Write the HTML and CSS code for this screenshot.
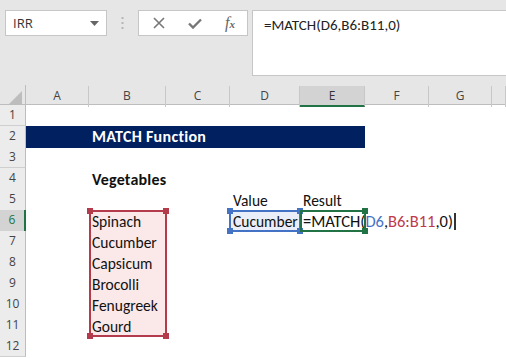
FILE: index.html
```html
<!DOCTYPE html>
<html lang="en">
  <head>
    <meta charset="UTF-8" />
    <title>MATCH Function</title>
    <link rel="stylesheet" href="styles.css">
  </head>
  <body>
    <div class="toolbar">
      <div class="namebox">
        <span>IRR</span>
        <svg width="9" height="5" viewBox="0 0 9 5"><path d="M0 0h9L4.5 5z" fill="#666"/></svg>
      </div>
      <div class="grip">
        <svg width="3" height="12" viewBox="0 0 3 12"><rect x="0.5" y="0" width="2" height="2" fill="#b5b5b5"/><rect x="0.5" y="5" width="2" height="2" fill="#b5b5b5"/><rect x="0.5" y="10" width="2" height="2" fill="#b5b5b5"/></svg>
      </div>
      <div class="fxbtns">
        <svg width="12" height="12" viewBox="0 0 12 12"><path d="M1 1l10 10M11 1L1 11" stroke="#777" stroke-width="1.6"/></svg>
        <svg width="14" height="11" viewBox="0 0 14 11"><path d="M1 5.5l4 4L13 1.5" stroke="#777" stroke-width="2.4" fill="none"/></svg>
        <span class="fx">f<small>x</small></span>
      </div>
      <div class="formula">=MATCH(D6,B6:B11,0)</div>
    </div>

    <div class="sheet">
      <div class="row heads">
        <div class="corner"><svg width="14" height="14" viewBox="0 0 14 14"><path d="M14 0v14H0z" fill="#bdbdbd"/></svg></div>
        <div class="ch">A</div>
        <div class="ch">B</div>
        <div class="ch">C</div>
        <div class="ch">D</div>
        <div class="ch active">E</div>
        <div class="ch">F</div>
        <div class="ch">G</div>
        <div class="ch"></div>
      </div>
      <div class="row"><div class="rh">1</div></div>
      <div class="row"><div class="rh">2</div><div class="title">MATCH Function</div></div>
      <div class="row"><div class="rh">3</div></div>
      <div class="row"><div class="rh">4</div><div class="cell colb bold">Vegetables</div></div>
      <div class="row"><div class="rh">5</div><div class="cell cold">Value</div><div class="cell cole">Result</div></div>
      <div class="row"><div class="rh active">6</div><div class="cell colb pink">Spinach</div><div class="cell cold blue">Cucumber</div><div class="cell cole wide">=MATCH(<span class="ref-d">D6</span>,<span class="ref-b">B6:B11</span>,0)<i class="caret"></i></div></div>
      <div class="row"><div class="rh">7</div><div class="cell colb pink">Cucumber</div></div>
      <div class="row"><div class="rh">8</div><div class="cell colb pink">Capsicum</div></div>
      <div class="row"><div class="rh">9</div><div class="cell colb pink">Brocolli</div></div>
      <div class="row"><div class="rh">10</div><div class="cell colb pink">Fenugreek</div></div>
      <div class="row"><div class="rh">11</div><div class="cell colb pink">Gourd</div></div>
      <div class="row"><div class="rh">12</div></div>

      <div class="range red"><span class="h tl"></span><span class="h tr"></span><span class="h bl"></span><span class="h br"></span></div>
      <div class="range bluebox"><span class="h tl"></span><span class="h tr"></span><span class="h bl"></span><span class="h br"></span></div>
      <div class="range greenbox"><span class="h tr"></span><span class="h br"></span></div>
    </div>
  </body>
</html>
```

FILE: styles.css
```css
* {
  margin: 0;
  box-sizing: border-box;
}

body {
  margin: 0;
  padding: 0;
  background: #fff;
  font-family: Carlito, Lato, "Liberation Sans", sans-serif;
  overflow: hidden;
}

/* formula bar */

.toolbar {
  height: 85px;
  background: #e6e6e6;
  display: flex;
  align-items: flex-start;
  padding-top: 10px;
  padding-left: 5px;
}

.namebox {
  width: 102px;
  height: 26px;
  background: #fff;
  border: 1px solid #c6c6c6;
  display: flex;
  align-items: center;
  justify-content: space-between;
  padding: 0 7px 0 7px;
  font-family: "Open Sans", sans-serif;
  font-size: 13px;
  color: #333;
}

.grip {
  width: 31px;
  height: 26px;
  display: flex;
  align-items: center;
  justify-content: center;
}

.fxbtns {
  width: 110px;
  height: 26px;
  background: #fff;
  border: 1px solid #c6c6c6;
  display: flex;
  align-items: center;
  justify-content: space-between;
  padding: 0 12px 0 14px;
}

.fx {
  font-family: "Liberation Serif", serif;
  font-style: italic;
  font-size: 16px;
  color: #666;
  line-height: 1;
}

.fx small {
  font-size: 11px;
  font-weight: bold;
}

.formula {
  margin-left: 4px;
  flex: 1;
  height: 66px;
  background: #fff;
  border: 1px solid #c6c6c6;
  border-right: 0;
  padding: 5px 0 0 11px;
  font-size: 15px;
  color: #222;
}

/* sheet */

.sheet {
  position: relative;
}

.row {
  display: grid;
  grid-template-columns: 26px 63px 77px 64px 70px 65px 64px 63px 1fr;
  height: 21px;
}

.row.heads {
  height: 20px;
  background: #e6e6e6;
  border-bottom: 1px solid #bdbdbd;
}

.corner {
  display: flex;
  align-items: flex-end;
  justify-content: flex-end;
  padding: 0 3px 2px 0;
  border-right: 1px solid #bdbdbd;
}

.ch {
  border-right: 1px solid #c8c8c8;
  text-align: center;
  font-family: "Open Sans", sans-serif;
  font-size: 12px;
  color: #444;
  line-height: 19px;
  margin-top: 1px;
}

.ch.active {
  background: #d3d3d3;
  border-bottom: 2px solid #217346;
  color: #333;
}

.rh {
  grid-column: 1;
  background: #ececec;
  border-right: 1px solid #bdbdbd;
  border-bottom: 1px solid #cfcfcf;
  text-align: center;
  font-family: "Open Sans", sans-serif;
  font-size: 12px;
  color: #444;
  line-height: 20px;
}

.rh.active {
  background: #d3d3d3;
  border-right: 2px solid #217346;
  color: #217346;
}

.cell {
  font-size: 15.5px;
  color: #111;
  padding: 1px 0 0 3px;
  line-height: 21px;
  white-space: nowrap;
}

.colb {
  grid-column: 3;
}

.cold {
  grid-column: 5;
}

.cole {
  grid-column: 6;
}

.bold {
  font-weight: bold;
  font-size: 16px;
  letter-spacing: 0.2px;
}

.title {
  grid-column: 2 / 7;
  background: #002060;
  color: #fff;
  font-weight: bold;
  font-size: 16px;
  letter-spacing: 0.3px;
  line-height: 22px;
  padding-left: 66px;
}

.pink {
  background: #fbe9ea;
}

.blue {
  background: #e9eef8;
}

.wide {
  overflow: visible;
  padding-left: 3px;
  font-size: 16.5px;
}

.ref-d {
  color: #4472c4;
}

.ref-b {
  color: #c0394b;
}

.caret {
  display: inline-block;
  width: 2px;
  height: 17px;
  background: #333;
  vertical-align: -3px;
  margin-left: 1px;
}

/* reference highlights */

.range {
  position: absolute;
  border: 2px solid;
}

.range.red {
  left: 89px;
  top: 125px;
  width: 78px;
  height: 127px;
  border-color: #b33b4b;
}

.range.bluebox {
  left: 229px;
  top: 125px;
  width: 72px;
  height: 22px;
  border-color: #4472c4;
}

.range.greenbox {
  left: 300px;
  top: 125px;
  width: 66px;
  height: 22px;
  border-color: #217346;
}

.h {
  position: absolute;
  width: 6px;
  height: 6px;
}

.red .h {
  background: #b33b4b;
}

.bluebox .h {
  background: #4472c4;
}

.greenbox .h {
  background: #217346;
}

.tl {
  left: -4px;
  top: -4px;
}

.tr {
  right: -4px;
  top: -4px;
}

.bl {
  left: -4px;
  bottom: -4px;
}

.br {
  right: -4px;
  bottom: -4px;
}
```
